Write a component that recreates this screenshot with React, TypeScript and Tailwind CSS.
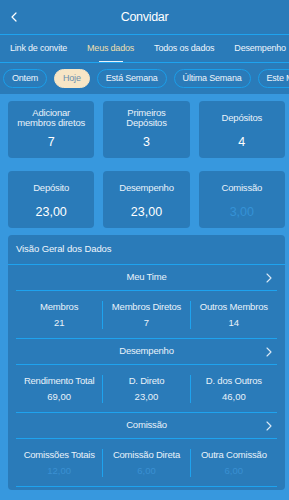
import React from "react";

const Chevron = ({ className = "" }: { className?: string }) => (
  <svg width="6" height="10" viewBox="0 0 6 10" className={className} fill="none">
    <path d="M1 1 L5 5 L1 9" stroke="currentColor" strokeWidth="1.1" strokeLinecap="round" strokeLinejoin="round" />
  </svg>
);

const StatCard = ({ label, value, faded = false }: { label: React.ReactNode; value: string; faded?: boolean }) => (
  <div className="flex-1 h-[57px] rounded-[4px] bg-[#2a7bb9] flex flex-col items-center">
    <div className="mt-[7px] h-[20px] flex items-center text-center text-[9.5px] leading-[10px] tracking-[-0.2px] text-[#e9f2f9]">
      {label}
    </div>
    <div className={`mt-[6px] text-[12.5px] leading-[16px] ${faded ? "text-[#3592d6]" : "text-white"}`}>{value}</div>
  </div>
);

const SectionRow = ({ title }: { title: string }) => (
  <div className="relative h-[26px] mx-[8px] flex items-center justify-center border-b border-[#1ea3ef]">
    <span className="text-[9.5px] tracking-[-0.2px] text-[#e9f2f9]">{title}</span>
    <Chevron className="absolute right-[5px] text-[#dbe9f5]" />
  </div>
);

const Triple = ({ items, faded = false }: { items: [string, string][]; faded?: boolean }) => (
  <div className="mx-[8px] h-[48px] flex items-center border-b border-[#1ea3ef]">
    {items.map(([l, v], i) => (
      <div
        key={i}
        className={`flex-1 flex flex-col items-center justify-center h-[28px] ${i > 0 ? "border-l border-[#1ea3ef]" : ""}`}
      >
        <div className="text-[9.5px] leading-[13px] tracking-[-0.2px] text-[#e9f2f9] whitespace-nowrap">{l}</div>
        <div className={`mt-[3px] text-[9.5px] leading-[13px] ${faded ? "text-[#3a90d2]" : "text-[#e9f2f9]"}`}>{v}</div>
      </div>
    ))}
  </div>
);

export default function App() {
  const tabs = ["Link de convite", "Meus dados", "Todos os dados", "Desempenho"];
  const chips = ["Ontem", "Hoje", "Está Semana", "Última Semana", "Este Mês"];
  return (
    <div
      className="w-[289px] h-[500px] overflow-hidden bg-[#3798de]"
      style={{ fontFamily: '"Liberation Sans", Arial, Helvetica, sans-serif' }}
    >
      <div className="bg-[#2a7bb9]">
        <div className="relative h-[35px] flex items-center justify-center border-b border-[#1ea3ef]">
          <svg width="6" height="10" viewBox="0 0 6 10" className="absolute left-[11px] top-[12px]" fill="none">
            <path d="M5 1 L1 5 L5 9" stroke="white" strokeWidth="1.2" strokeLinecap="round" strokeLinejoin="round" />
          </svg>
          <span className="text-[12.5px] tracking-[-0.3px] text-white">Convidar</span>
        </div>
        <div className="h-[28px] flex items-center border-b border-[#1ea3ef] whitespace-nowrap overflow-hidden">
          {tabs.map((t, i) => (
            <div key={t} className="relative shrink-0 h-full flex items-center px-[10px]">
              <span className={`text-[9px] tracking-[-0.2px] ${i === 1 ? "text-[#ecdfae]" : "text-[#eef5fb]"}`}>{t}</span>
              {i === 1 && <div className="absolute bottom-0 left-1/2 -translate-x-1/2 w-[24px] h-[1.5px] bg-[#e9f2f9]" />}
            </div>
          ))}
        </div>
        <div className="h-[31px] flex items-center gap-[7px] pl-[3px] whitespace-nowrap overflow-hidden">
          {chips.map((c, i) => (
            <div
              key={c}
              className={`shrink-0 h-[19px] px-[8px] rounded-full flex items-center text-[9px] tracking-[-0.2px] border ${
                i === 1 ? "bg-[#f7e6c6] border-[#f7e6c6] text-[#6b8fae]" : "border-[#1b9ee9] text-[#eef5fb]"
              }`}
            >
              {c}
            </div>
          ))}
        </div>
      </div>

      <div className="pl-[8px] pr-[4px] pt-[7px]">
        <div className="flex gap-[9px]">
          <StatCard label={<>Adicionar<br />membros diretos</>} value="7" />
          <StatCard label={<>Primeiros<br />Depósitos</>} value="3" />
          <StatCard label="Depósitos" value="4" />
        </div>
        <div className="flex gap-[9px] mt-[13px]">
          <StatCard label="Depósito" value="23,00" />
          <StatCard label="Desempenho" value="23,00" />
          <StatCard label="Comissão" value="3,00" faded />
        </div>

        <div className="mt-[7px] rounded-[4px] bg-[#2a7bb9] pb-[3px]">
          <div className="h-[30px] px-[8px] flex items-center border-b border-[#1ea3ef]">
            <span className="text-[9.5px] tracking-[-0.1px] text-[#eef5fb]">Visão Geral dos Dados</span>
          </div>
          <SectionRow title="Meu Time" />
          <Triple items={[["Membros", "21"], ["Membros Diretos", "7"], ["Outros Membros", "14"]]} />
          <SectionRow title="Desempenho" />
          <Triple items={[["Rendimento Total", "69,00"], ["D. Direto", "23,00"], ["D. dos Outros", "46,00"]]} />
          <SectionRow title="Comissão" />
          <Triple faded items={[["Comissões Totais", "12,00"], ["Comissão Direta", "6,00"], ["Outra Comissão", "6,00"]]} />
        </div>
      </div>
    </div>
  );
}
